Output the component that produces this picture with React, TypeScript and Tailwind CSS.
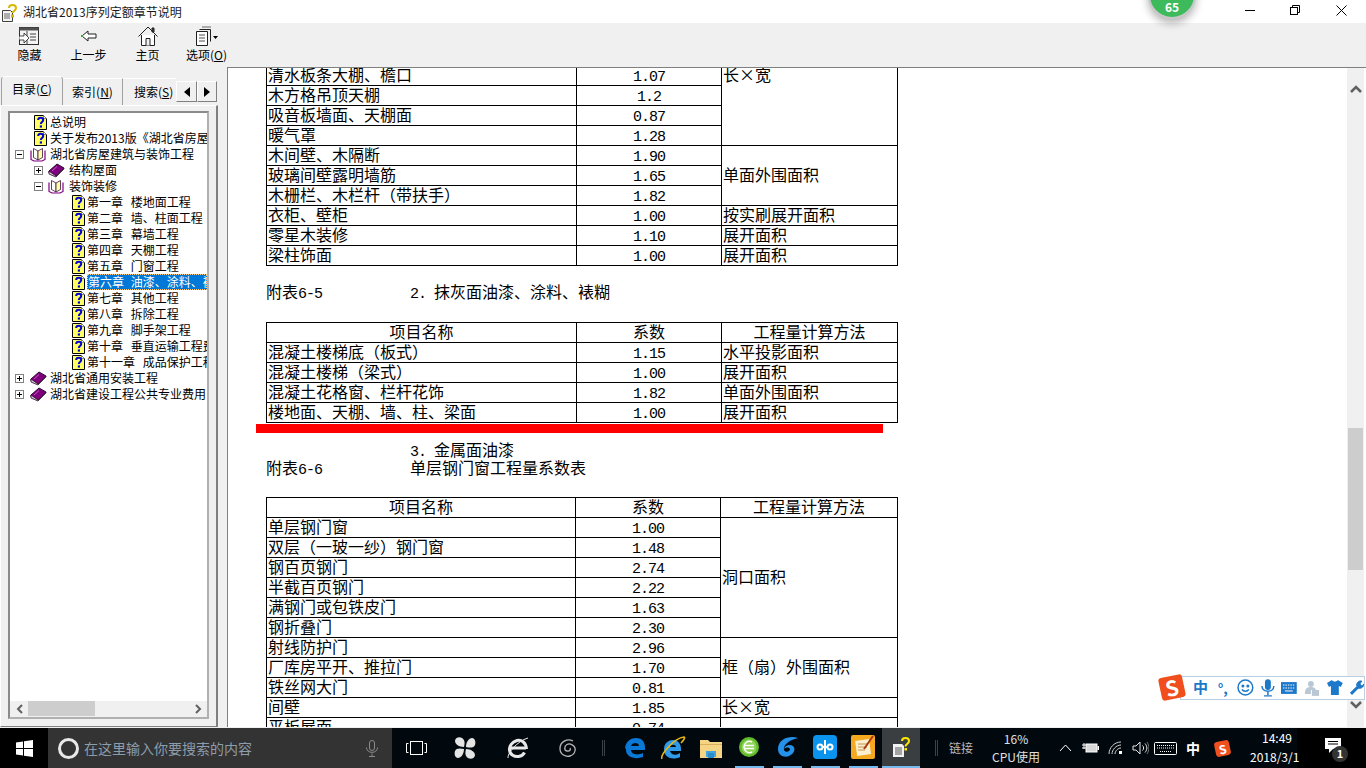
import React from "react";

const CJK = "font-['Noto_Sans_CJK_SC','Noto_Sans',sans-serif]";
const LP = "\uFF08";
const RP = "\uFF09";

function Num({ children }: { children: React.ReactNode }) {
  return <span className="font-['Liberation_Mono',monospace] text-[15px] leading-none tracking-[-1px] whitespace-pre">{children}</span>;
}

function HelpDoc() {
  return (
    <svg width="13" height="15" viewBox="0 0 13 15" className="shrink-0">
      <path d="M.5.5h9l3 3v11H.5z" fill="#ffff66" stroke="#000" />
      <path d="M9.5.5v3h3" fill="#fff" stroke="#808080" />
      <path d="M4.2 5c0-3 5-3 5 0 0 2-2.4 2-2.4 4" fill="none" stroke="#0000d8" strokeWidth="2" />
      <rect x="5.8" y="10.4" width="2.2" height="2.2" fill="#0000d8" />
    </svg>
  );
}

function BookClosed() {
  return (
    <svg width="17" height="15" viewBox="0 0 17 15" className="shrink-0">
      <path d="M1 8 9 1l7 4-8 8-7-3z" fill="#800080" stroke="#2a0a2a" />
      <path d="M1 8v3l7 3 8-8V5l-8 8z" fill="#d8c8d8" stroke="#2a0a2a" strokeWidth=".8" />
      <path d="M4 8l5-4.5" stroke="#c060c0" strokeWidth="1" />
    </svg>
  );
}

function BookOpen() {
  return (
    <svg width="16" height="15" viewBox="0 0 16 15" className="shrink-0">
      <path d="M1 3.500v9l3 1.500h8l3-1.500v-9" fill="#fff" stroke="#800080" strokeWidth="1.200" />
      <path d="M3.500 1.500l4.500 2.500v9l-4.500-2.500z" fill="#fff" stroke="#3a103a" strokeWidth=".8" />
      <path d="M12.500 1.500L8 4v9l4.500-2.500z" fill="#ffffa8" stroke="#3a103a" strokeWidth=".8" />
    </svg>
  );
}

function Expander({ open }: { open: boolean }) {
  return (
    <svg width="9" height="9" viewBox="0 0 9 9" className="shrink-0">
      <rect x=".5" y=".5" width="8" height="8" fill="#fff" stroke="#808080" />
      <path d={open ? "M2 4.5h5" : "M2 4.5h5M4.5 2v5"} stroke="#000" />
    </svg>
  );
}

type Row = { k: "d0" | "b0" | "b1" | "d2"; t: string; open?: boolean; sel?: boolean };
const rows: Row[] = [
  { k: "d0", t: "总说明" },
  { k: "d0", t: "关于发布2013版《湖北省房屋建筑与装饰工程" },
  { k: "b0", t: "湖北省房屋建筑与装饰工程", open: true },
  { k: "b1", t: "结构屋面" },
  { k: "b1", t: "装饰装修", open: true },
  { k: "d2", t: "第一章 楼地面工程" },
  { k: "d2", t: "第二章 墙、柱面工程" },
  { k: "d2", t: "第三章 幕墙工程" },
  { k: "d2", t: "第四章 天棚工程" },
  { k: "d2", t: "第五章 门窗工程" },
  { k: "d2", t: "第六章 油漆、涂料、裱糊工程", sel: true },
  { k: "d2", t: "第七章 其他工程" },
  { k: "d2", t: "第八章 拆除工程" },
  { k: "d2", t: "第九章 脚手架工程" },
  { k: "d2", t: "第十章 垂直运输工程费" },
  { k: "d2", t: "第十一章 成品保护工程" },
  { k: "b0", t: "湖北省通用安装工程" },
  { k: "b0", t: "湖北省建设工程公共专业费用" },
];

function TreeRow({ r }: { r: Row }) {
  const text = (
    <span
      className={
        r.sel
          ? "h-4 w-[120px] shrink-0 overflow-hidden whitespace-pre bg-[#0078d7] pl-px leading-4 text-white outline-1 -outline-offset-1 outline-dotted outline-[#ffcc88] [word-spacing:4px]"
          : "whitespace-pre leading-4 [word-spacing:5px]"
      }
    >
      {r.t}
    </span>
  );
  return (
    <div className="flex h-4 w-[197px] items-center overflow-hidden text-[12px] text-black">
      {r.k === "d0" && (
        <>
          <span className="w-[24px] shrink-0" />
          <HelpDoc />
          <span className="w-[3px] shrink-0" />
          {text}
        </>
      )}
      {r.k === "b0" && (
        <>
          <span className="w-[5px] shrink-0" />
          <Expander open={!!r.open} />
          <span className="w-[6px] shrink-0" />
          {r.open ? <BookOpen /> : <BookClosed />}
          <span className={r.open ? "w-[4px] shrink-0" : "w-[3px] shrink-0"} />
          {text}
        </>
      )}
      {r.k === "b1" && (
        <>
          <span className="w-[24px] shrink-0" />
          <Expander open={!!r.open} />
          <span className="w-[5px] shrink-0" />
          {r.open ? <BookOpen /> : <BookClosed />}
          <span className={r.open ? "w-[5px] shrink-0" : "w-[4px] shrink-0"} />
          {text}
        </>
      )}
      {r.k === "d2" && (
        <>
          <span className="w-[62px] shrink-0" />
          <HelpDoc />
          <span className="w-[2px] shrink-0" />
          {text}
        </>
      )}
    </div>
  );
}

function LeftPane() {
  return (
    <div className="flex h-full w-[218px] shrink-0 flex-col bg-[#f0f0f0]">
      <div className="flex h-[38px] shrink-0 items-end text-[12px] text-black">
        <div className="ml-px flex h-[29px] w-[62px] items-center justify-center rounded-t-sm border-x border-t border-x-[#a0a0a0] border-t-white pb-1">
          目录(<u>C</u>)
        </div>
        <div className="flex h-[27px] w-[60px] items-center justify-center border-r border-t border-r-[#a0a0a0] border-t-white">
          索引(<u>N</u>)
        </div>
        <div className="flex h-[27px] w-[53px] items-center justify-start overflow-hidden whitespace-nowrap border-t border-t-white pl-[11px]">
          搜索(<u>S</u>)
        </div>
        <div className="mb-[3px] flex h-[21px] w-[21px] items-center justify-center border border-b-[#808080] border-l-white border-r-[#808080] border-t-white text-[10px]">
          <svg width="6" height="10" viewBox="0 0 6 10"><path d="M6 0v10L0 5z" fill="#000" /></svg>
        </div>
        <div className="mb-[3px] flex h-[21px] w-[20px] items-center justify-center border border-b-[#808080] border-l-white border-r-[#808080] border-t-white text-[10px]">
          <svg width="6" height="10" viewBox="0 0 6 10"><path d="M0 0v10l6-5z" fill="#000" /></svg>
        </div>
      </div>
      <div className="flex min-h-0 flex-1 flex-col border-b border-r-2 border-b-[#808080] border-r-[#808080] border-l border-l-white border-t border-t-white pb-[7px] pl-[7px] pr-[7px] pt-[5px]">
        <div className="flex min-h-0 flex-1 flex-col border-2 border-[#8a8a8a] border-b-[#b0b0b0] border-r-[#b0b0b0] bg-white">
          <div className="min-h-0 flex-1 overflow-hidden pt-px">
            {rows.map((r, i) => (
              <TreeRow key={i} r={r} />
            ))}
          </div>
          <div className="flex h-[15px] shrink-0 items-center bg-[#f0f0f0]">
            <div className="flex w-[18px] justify-center">
              <svg width="7" height="10" viewBox="0 0 7 10"><path d="M6 1 2 5l4 4" fill="none" stroke="#606060" strokeWidth="2" /></svg>
            </div>
            <div className="h-[15px] w-[67px] bg-[#cdcdcd]" />
            <div className="flex-1" />
            <div className="flex w-[18px] justify-center">
              <svg width="7" height="10" viewBox="0 0 7 10"><path d="M1 1l4 4-4 4" fill="none" stroke="#606060" strokeWidth="2" /></svg>
            </div>
          </div>
          <div className="h-px shrink-0 bg-[#f0f0f0]" />
        </div>
      </div>
    </div>
  );
}

const td = "border border-black p-0 align-middle";
const box = "h-[19px] whitespace-nowrap leading-[16px]";

function T({ rows, widths }: { rows: React.ReactNode; widths: [string, string, string] }) {
  return (
    <table className="w-[631px] table-fixed border-collapse text-[16px] text-black">
      <colgroup>
        <col className={widths[0]} />
        <col className={widths[1]} />
        <col className={widths[2]} />
      </colgroup>
      <tbody>{rows}</tbody>
    </table>
  );
}

function R({ a, b, c, span, top }: { a: string; b: string; c?: string; span?: number; top?: boolean }) {
  return (
    <tr>
      <td className={td}><div className={`${box} pl-px`}>{a}</div></td>
      <td className={td}><div className={`${box} text-center`}><Num>{b}</Num></div></td>
      {c !== undefined && (
        <td className={`${td} ${top ? "align-top" : ""}`} rowSpan={span}><div className={`${box} pl-px`}>{c}</div></td>
      )}
    </tr>
  );
}

function H() {
  return (
    <tr>
      <td className={td}><div className={`${box} text-center`}>项目名称</div></td>
      <td className={td}><div className={`${box} text-center`}>系数</div></td>
      <td className={td}><div className={`${box} text-center`}>工程量计算方法</div></td>
    </tr>
  );
}

function Caption({ left, right }: { left: React.ReactNode; right: React.ReactNode }) {
  return (
    <div className="flex h-[18px] text-[16px] leading-[16px] text-black">
      <div className="w-[144px] shrink-0">{left}</div>
      <div>{right}</div>
    </div>
  );
}

function Doc() {
  return (
    <div className="relative min-w-0 flex-1 overflow-hidden border-l border-t border-l-[#808080] border-t-[#808080] bg-white pl-[38px]">
      <div className="-mt-[3px]">
        <T
          widths={["w-[310px]", "w-[145px]", "w-[176px]"]}
          rows={
            <>
              <R a="清水板条大棚、檐口" b="1.07" c="长×宽" span={4} top />
              <R a="木方格吊顶天棚" b="1.2" />
              <R a="吸音板墙面、天棚面" b="0.87" />
              <R a="暖气罩" b="1.28" />
              <R a="木间壁、木隔断" b="1.90" c="单面外围面积" span={3} />
              <R a="玻璃间壁露明墙筋" b="1.65" />
              <R a={`木栅栏、木栏杆${LP}带扶手${RP}`} b="1.82" />
              <R a="衣柜、壁柜" b="1.00" c="按实刷展开面积" />
              <R a="零星木装修" b="1.10" c="展开面积" />
              <R a="梁柱饰面" b="1.00" c="展开面积" />
            </>
          }
        />
      </div>
      <div className="mt-[17px]">
        <Caption left={<>附表<Num>6-5</Num></>} right={<><Num>2. </Num>抹灰面油漆、涂料、裱糊</>} />
      </div>
      <div className="mt-[21px]">
        <T
          widths={["w-[310px]", "w-[145px]", "w-[176px]"]}
          rows={
            <>
              <H />
              <R a={`混凝土楼梯底${LP}板式${RP}`} b="1.15" c="水平投影面积" />
              <R a={`混凝土楼梯${LP}梁式${RP}`} b="1.00" c="展开面积" />
              <R a="混凝土花格窗、栏杆花饰" b="1.82" c="单面外围面积" />
              <R a="楼地面、天棚、墙、柱、梁面" b="1.00" c="展开面积" />
            </>
          }
        />
      </div>
      <div className="mt-[18px]">
        <Caption left={null} right={<><Num>3. </Num>金属面油漆</>} />
        <Caption left={<>附表<Num>6-6</Num></>} right="单层钢门窗工程量系数表" />
      </div>
      <div className="mt-[20px]">
        <T
          widths={["w-[309px]", "w-[145px]", "w-[177px]"]}
          rows={
            <>
              <H />
              <R a="单层钢门窗" b="1.00" c="洞口面积" span={6} />
              <R a={`双层${LP}一玻一纱${RP}钢门窗`} b="1.48" />
              <R a="钢百页钢门" b="2.74" />
              <R a="半截百页钢门" b="2.22" />
              <R a="满钢门或包铁皮门" b="1.63" />
              <R a="钢折叠门" b="2.30" />
              <R a="射线防护门" b="2.96" c={`框${LP}扇${RP}外围面积`} span={3} />
              <R a="厂库房平开、推拉门" b="1.70" />
              <R a="铁丝网大门" b="0.81" />
              <R a="间壁" b="1.85" c="长×宽" />
              <R a="平板屋面" b="0.74" c="" />
            </>
          }
        />
      </div>
      <div className="absolute left-[28px] top-[356px] h-[9px] w-[627px] bg-[#ff0000]" />
    </div>
  );
}

function Scrollbar() {
  return (
    <div className="flex w-[19px] shrink-0 border-t border-t-[#808080] bg-white">
      <div className="relative flex w-[17px] flex-col items-center bg-[#f0f0f0]">
        <svg width="12" height="8" viewBox="0 0 12 8" className="mt-[17px]"><path d="M1 7l5-5 5 5" fill="none" stroke="#606060" strokeWidth="2.5" /></svg>
        <div className="mt-[335px] h-[142px] w-[15px] bg-[#cdcdcd]" />
        <div className="flex-1" />
        <svg width="12" height="8" viewBox="0 0 12 8" className="mb-[18px]"><path d="M1 1l5 5 5-5" fill="none" stroke="#606060" strokeWidth="2.5" /></svg>
      </div>
    </div>
  );
}

function ToolBtn({ icon, label }: { icon: React.ReactNode; label: React.ReactNode }) {
  return (
    <div className="flex w-[59px] flex-col items-center text-[12px] text-black">
      <div className="flex h-[22px] items-center">{icon}</div>
      <div className="whitespace-nowrap leading-4">{label}</div>
    </div>
  );
}

function Slot({ w, children, cls }: { w: string; children?: React.ReactNode; cls?: string }) {
  return <div className={`flex h-full shrink-0 items-center justify-center ${w} ${cls || ""}`}>{children}</div>;
}

function Underlined({ w, children, cls }: { w: string; children: React.ReactNode; cls?: string }) {
  return (
    <div className={`flex h-full shrink-0 flex-col items-center ${w} ${cls || ""}`}>
      <div className="flex flex-1 items-center">{children}</div>
      <div className="h-[2px] w-[29px] bg-[#76b9ed]" />
    </div>
  );
}

function Taskbar() {
  return (
    <div className="flex h-[40px] shrink-0 bg-[#02090e] text-white">
      <Slot w="w-[48px]" cls="bg-black">
        <svg width="17" height="17" viewBox="0 0 17 17" fill="#fff"><path d="M0 2.4 7 1.4v6.600H0zM8 1.300 17 0v8H8zM0 9h7v6.600L0 14.600zM8 9h9v8l-9-1.300z" /></svg>
      </Slot>
      <div className="flex h-full w-[344px] shrink-0 items-center bg-[#333333]">
        <div className="ml-[10px] h-[21px] w-[21px] rounded-full border-[3px] border-[#e8e8e8]" />
        <span className="ml-[5px] text-[14px] text-[#8d9cab]">在这里输入你要搜索的内容</span>
        <div className="flex-1" />
        <svg width="14" height="17" viewBox="0 0 14 17" fill="none" stroke="#8a8a8a" className="mr-[13px]"><rect x="4.500" y=".5" width="5" height="10" rx="2.500" /><path d="M1.500 7.500c0 6.500 11 6.500 11 0M7 13.500v3M4 16.500h6" /></svg>
      </div>
      <Slot w="w-[49px]">
        <svg width="21" height="14" viewBox="0 0 21 14" fill="none" stroke="#fff" strokeWidth="1"><rect x="4.500" y=".5" width="12" height="13" /><path d="M2.500 2.500h-2v9h2M18.500 2.500h2v9h-2" /></svg>
      </Slot>
      <Slot w="w-[48px]">
        <svg width="24" height="24" viewBox="0 0 24 24" fill="#e4e4e4"><path d="M11 11C6 11 2 8 2 5s4-5 7-3 3 5 2 9zM13 11c0-5 3-9 6-9s4 4 3 7-5 3-9 2zM13 13c5 0 9 3 9 6s-4 5-7 3-3-5-2-9zM11 13c0 5-3 9-6 9s-4-4-3-7 5-3 9-2z" /></svg>
      </Slot>
      <Slot w="w-[58px]">
        <svg width="22" height="24" viewBox="0 0 22 24" fill="none" stroke="#e8e8e8"><path d="M3 12h16M19.500 13C19 6 14 3.500 10 4.500 5 6 2 10 2.500 14c.5 5 5 7 9 6.500 3-.5 5-2 6-4" strokeWidth="3" /><path d="M1 22C0 18 10 5 21 2" strokeWidth="1" /></svg>
      </Slot>
      <Slot w="w-[42px]">
        <svg width="20" height="20" viewBox="0 0 20 20" fill="none" stroke="#b8b8b8" strokeWidth="1.300"><path d="M15 3C9 0 2 4 2 10.500S8 19 12 18s6-5 5-8-5-5-8-3.500-3 6 0 6.500 4-1.500 3-3" /></svg>
      </Slot>
      <Slot w="w-[27px]" cls="justify-start pl-[13px]">
        <div className="h-[16px] w-[3px] border-x border-[#3c4246]" />
      </Slot>
      <Slot w="w-[38px]">
        <svg width="22" height="22" viewBox="0 0 22 22"><path d="M1 11C2 4 7 1 12 1c6 0 9 4 9 10v2H7c0 4 6 6 12 3v4c-8 3-17 0-17-7 0-1 0-1-1-2zM7 9h8c0-4-7-4-8 0z" fill="#0a78d7" /></svg>
      </Slot>
      <Slot w="w-[38px]">
        <svg width="26" height="26" viewBox="0 0 26 26"><path d="M4 14C4 8 9 5 13 5c5 0 8 4 8 9v2H10c1 4 6 5 10 2v4c-6 3-16 2-16-8zM10 12h6c0-3-6-3-6 0z" fill="#2f9be8" /><path d="M2 24C0 20 14 3 24 2c2 0-1 4-3 6" fill="none" stroke="#e8b818" strokeWidth="1.500" /></svg>
      </Slot>
      <Slot w="w-[38px]">
        <svg width="22" height="19" viewBox="0 0 22 19"><path d="M0 1h8l2 2h12v16H0z" fill="#f5d483" /><rect x="0" y="5" width="22" height="1" fill="#d8b060" /><path d="M6 18v-6h10v6h-2v-3H8v3z" fill="#3fa5dc" /><rect x="8" y="14" width="6" height="5" fill="#2c8bc8" /></svg>
      </Slot>
      <Underlined w="w-[38px]">
        <svg width="22" height="22" viewBox="0 0 22 22"><circle cx="11" cy="11" r="10" fill="#5fbb2a" /><circle cx="11" cy="11" r="7.500" fill="#8fd35a" /><path d="M6 9.500h10M6 12.500h10" stroke="#fff" strokeWidth="1.500" /><path d="M14 6c-4-2-8 1-8 5s4 7 8 5" fill="none" stroke="#fff" strokeWidth="1.500" /></svg>
      </Underlined>
      <Underlined w="w-[38px]">
        <svg width="24" height="24" viewBox="0 0 24 24"><path d="M23 3c-7-3-20 0-20 11 0 7 7 9 11 7 5-2 7-7 4-10-3-2-8-1-9 3 2-2 5-2 6 0 0 3-5 4-6 1-1-5 5-10 14-12z" fill="#2491ea" /></svg>
      </Underlined>
      <Underlined w="w-[38px]">
        <svg width="24" height="24" viewBox="0 0 24 24"><rect width="24" height="24" rx="4" fill="#0a94ee" /><path d="M12 5v14M9 12h6" fill="none" stroke="#fff" strokeWidth="2" /><circle cx="7" cy="12" r="2.500" fill="none" stroke="#fff" strokeWidth="2" /><circle cx="17" cy="12" r="2.500" fill="none" stroke="#fff" strokeWidth="2" /></svg>
      </Underlined>
      <Underlined w="w-[38px]">
        <svg width="24" height="24" viewBox="0 0 24 24"><rect width="24" height="24" rx="2" fill="#f4a921" /><rect x="5" y="5" width="14" height="15" fill="#fbf0d0" transform="rotate(-8 12 12)" /><path d="M7 9h9M7 12h9M7 15h7" stroke="#c89050" /><path d="M22 1 13 14" stroke="#b03a10" strokeWidth="2" /></svg>
      </Underlined>
      <div className="flex h-full w-[38px] shrink-0 flex-col items-center bg-[#3a3e40]">
        <div className="flex flex-1 items-center">
          <svg width="17" height="20" viewBox="0 0 17 20"><path d="M0 7h9l2 2v11H0z" fill="#f2f2f2" /><path d="M2 11h7M2 13h7M2 15h7M2 17h7" stroke="#555" /><path d="M9 4c0-4 7-4 7 0 0 3-3.500 3-3.500 5.500" fill="none" stroke="#ffe800" strokeWidth="2" /><rect x="11.500" y="11" width="2.500" height="2.500" fill="#ffe800" /></svg>
        </div>
        <div className="h-[2px] w-full bg-[#76b9ed]" />
      </div>
      <Slot w="w-[29px]" cls="justify-start pl-[15px]">
        <div className="h-[16px] w-[3px] border-x border-[#3c4246]" />
      </Slot>
      <div className="flex h-full w-[24px] shrink-0 items-center whitespace-nowrap text-[12px] text-[#b8b8b8]">链接</div>
      <div className="w-[19px] shrink-0" />
      <div className="flex h-full w-[48px] shrink-0 flex-col items-center pt-[2px] text-[12px] leading-[18px] text-[#e0e0e0]">
        <span>16%</span>
        <span className="whitespace-nowrap">CPU使用</span>
      </div>
      <div className="w-[13px] shrink-0" />
      <Slot w="w-[24px]">
        <svg width="13" height="8" viewBox="0 0 13 8" fill="none" stroke="#fff"><path d="M1 7l5.500-6L12 7" /></svg>
      </Slot>
      <Slot w="w-[26px]">
        <svg width="17" height="12" viewBox="0 0 17 12"><rect x="4" y="2" width="11" height="8" fill="#d8d8d8" stroke="#fff" /><rect x="15.500" y="4" width="1.500" height="4" fill="#fff" /><path d="M0 3h4M0 6h4M2 1v6" stroke="#fff" /></svg>
      </Slot>
      <Slot w="w-[25px]">
        <svg width="15" height="14" viewBox="0 0 15 14" fill="none" stroke="#d0d0d0"><path d="M1 13C1 7 6 1 13 1M4 13c0-4 4-9 9-9M7 13c0-3 3-6 6-6" strokeWidth="1" /><rect x="11" y="10" width="3" height="3" fill="#fff" stroke="none" /></svg>
      </Slot>
      <Slot w="w-[24px]">
        <svg width="17" height="14" viewBox="0 0 17 14" fill="none" stroke="#e8e8e8"><path d="M1 5h3l4-4v12l-4-4H1zM10.500 4.500c1.500 1.500 1.500 3.500 0 5M13 2.500c2.500 3 2.500 6 0 9" /><path d="M15 1c2.500 4 2.500 8 0 12" stroke="#777" /></svg>
      </Slot>
      <Slot w="w-[26px]">
        <svg width="23" height="13" viewBox="0 0 23 13" fill="none" stroke="#fff"><rect x=".5" y=".5" width="22" height="12" rx="1" /><path d="M3 3.500h17M3 6h17M6 9.500h11" strokeDasharray="1 1" /></svg>
      </Slot>
      <Slot w="w-[30px]" cls="text-[14px] font-bold">中</Slot>
      <Slot w="w-[28px]">
        <div className="flex h-[15px] w-[15px] -rotate-12 items-center justify-center rounded-[3px] bg-[#f0501e] text-[12px] font-bold leading-none text-white">S</div>
      </Slot>
      <div className="relative h-full w-[61px] shrink-0 text-[12px] text-white">
        <div className="absolute left-[26px] top-[1px] z-10 leading-[18px]">14:49</div>
        <div className="absolute left-[14px] top-[20px] z-10 whitespace-nowrap leading-[18px]">2018/3/1</div>
      </div>
      <div className="flex h-full w-[69px] shrink-0 items-center bg-black pl-[28px]">
        <div className="relative">
          <svg width="16" height="15" viewBox="0 0 16 15" fill="#fff" className="mb-[6px]"><path d="M0 0h16v11H8l-4 4v-4H0z" /><path d="M3 3.500h10M3 6h10" stroke="#000" /></svg>
          <div className="absolute left-[7px] top-[8px] flex h-[16px] w-[16px] items-center justify-center rounded-full bg-[#333] text-[11px] font-bold text-white">1</div>
        </div>
      </div>
    </div>
  );
}

function SogouBar() {
  return (
    <div className="absolute left-[1160px] top-[674px] z-20 flex h-[27px] items-center">
      <div className="z-10 flex h-[23px] w-[24px] -rotate-12 items-center justify-center rounded-[3px] bg-[#f04e1c] text-[21px] font-bold leading-none text-white">S</div>
      <div className="-ml-[4px] flex h-[24px] w-[185px] items-center border border-[#b8cfe4] bg-white pl-[12px]">
        <span className="w-[25px] text-[15px] font-bold text-[#1c78c8]">中</span>
        <span className="w-[20px] text-[14px] font-bold leading-none text-[#1c78c8]">°,</span>
        <svg width="17" height="17" viewBox="0 0 17 17" fill="none" stroke="#1c78c8" strokeWidth="1.500" className="mr-[7px]"><circle cx="8.500" cy="8.500" r="7.500" /><circle cx="6" cy="7" r=".8" fill="#1c78c8" /><circle cx="11" cy="7" r=".8" fill="#1c78c8" /><path d="M5 10.500c1.500 2.500 5.500 2.500 7 0" /></svg>
        <svg width="14" height="18" viewBox="0 0 14 18" className="mr-[6px]"><rect x="4" y="0" width="6" height="11" rx="3" fill="#1c78c8" /><path d="M1 7c0 7 12 7 12 0M7 13v3M3 17h8" fill="none" stroke="#1c78c8" strokeWidth="1.500" /></svg>
        <svg width="16" height="12" viewBox="0 0 16 12" className="mr-[7px]"><rect width="16" height="12" fill="#1c78c8" /><path d="M2 3h12M2 6h12" stroke="#fff" strokeDasharray="1.500 1" /><path d="M4 9h8" stroke="#fff" /></svg>
        <svg width="16" height="16" viewBox="0 0 16 16" className="mr-[8px]"><circle cx="7" cy="4" r="3" fill="#b9c8d4" /><path d="M1 13c0-5 3-6 6-6s5 1 5 3H7v4H1z" fill="#b9c8d4" /><rect x="8" y="10" width="8" height="6" fill="#b9c8d4" /></svg>
        <svg width="16" height="15" viewBox="0 0 16 15" fill="#1c78c8" className="mr-[6px]"><path d="M5 0 0 3l2 4 2-1v9h8V6l2 1 2-4-5-3c-1 2-5 2-6 0z" /></svg>
        <svg width="15" height="15" viewBox="0 0 15 15" fill="none" stroke="#1c78c8"><path d="M2 14 9 7" strokeWidth="3" /><path d="M8 6c-1-3 2-6 5-5l-2 3 2 2 2-2c0 4-4 5-6 4" fill="#1c78c8" /></svg>
      </div>
    </div>
  );
}

export default function App() {
  return (
    <div className={`relative flex h-[768px] w-[1366px] flex-col overflow-hidden bg-white ${CJK}`}>
      <div className="flex h-[23px] shrink-0 items-center bg-white text-[12px] text-[#1a1a1a]">
        <div className="ml-[2px] mr-[5px] mt-[2px]">
          <svg width="16" height="18" viewBox="0 0 16 18"><path d="M.5 6.500h8l2 2v9H.5z" fill="#f4f4f4" stroke="#404040" /><path d="M2 10h6M2 12h6M2 14h6" stroke="#666" /><path d="M7 4c0-4 7-4 7 0 0 3-3.500 3-3.500 5" fill="none" stroke="#d8b800" strokeWidth="2" /><rect x="9" y="10.500" width="3" height="3" fill="#d8b800" /></svg>
        </div>
        湖北省2013序列定额章节说明
      </div>
      <div className="flex h-[44px] shrink-0 bg-[#f0f0f0] pt-[2px]">
        <ToolBtn
          label="隐藏"
          icon={
            <svg width="21" height="19" viewBox="0 0 21 19"><rect x=".5" y=".5" width="19" height="17" fill="#f4f4f4" stroke="#303030" /><rect x=".5" y=".5" width="19" height="3" fill="#505050" /><path d="M8 4v14M11 7h6M11 10h6M11 13h6" stroke="#404040" /><path d="M0 9h5V6l5 5-5 5v-3H0z" fill="#fff" stroke="#202020" strokeWidth=".8" /></svg>
          }
        />
        <ToolBtn
          label="上一步"
          icon={
            <svg width="16" height="12" viewBox="0 0 16 12"><path d="M1 6l6-5v3h8v4H7v3z" fill="#fff" stroke="#202020" /><rect x="0" y="5" width="2" height="2" fill="#40a040" /></svg>
          }
        />
        <ToolBtn
          label="主页"
          icon={
            <svg width="20" height="20" viewBox="0 0 20 20" fill="none" stroke="#202020"><path d="M.5 10.500 10 1l9.500 9.500" strokeWidth="1" /><path d="M3.500 9v10.500h13V9" fill="#fff" /><path d="M8 19.500v-7h4v7" fill="#f0f0f0" /><path d="M14 2v4h2V2z" fill="#404040" /></svg>
          }
        />
        <ToolBtn
          label={<>选项(<u>O</u>)</>}
          icon={
            <svg width="22" height="20" viewBox="0 0 22 20" fill="none" stroke="#202020"><path d="M.5 5.500h11v14H.5z" fill="#fff" /><path d="M3.500 3.500h11v12" /><path d="M6 1h9" stroke="#666" /><path d="M3 9h6M3 12h6M3 15h6" stroke="#505050" /><path d="M17 10h5l-2.500 3z" fill="#000" stroke="none" /></svg>
          }
        />
      </div>
      <div className="flex min-h-0 flex-1">
        <LeftPane />
        <div className="h-full w-[9px] shrink-0 bg-[#f0f0f0]" />
        <Doc />
        <Scrollbar />
      </div>
      <div className="h-px shrink-0 bg-[#f0f0f0]" />
      <Taskbar />
      <div className="absolute left-[1148px] top-[-29px] z-20 flex h-[48px] w-[48px] items-end justify-center rounded-full border-2 border-[#c8c8c8] bg-[#3dbb5c] pb-[3px] text-[12px] font-bold leading-[14px] text-white shadow-[0_4px_8px_rgba(0,0,0,0.3)]">65</div>
      <div className="absolute left-[1245px] top-[10px] h-px w-[10px] bg-black" />
      <div className="absolute left-[1290px] top-[5px]">
        <svg width="10" height="10" viewBox="0 0 10 10" fill="none" stroke="#000"><rect x=".5" y="2.500" width="7" height="7" fill="#fff" /><path d="M2.500 2.500v-2h7v7h-2" /></svg>
      </div>
      <div className="absolute left-[1336px] top-[5px]">
        <svg width="11" height="11" viewBox="0 0 11 11" stroke="#000" strokeWidth="1"><path d="M.5.500l10 10M10.500.500l-10 10" /></svg>
      </div>
      <SogouBar />
    </div>
  );
}
